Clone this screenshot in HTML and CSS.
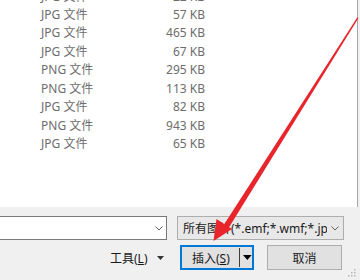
FILE: index.html
```html
<!DOCTYPE html>
<html>
<head>
<meta charset="utf-8">
<link rel="stylesheet" href="styles.css">
</head>
<body>
<div class="dialog">
  <div class="list">
    <div class="rows">
      <div class="row"><span class="type">JPG 文件</span><span class="size">22 KB</span></div>
      <div class="row"><span class="type">JPG 文件</span><span class="size">57 KB</span></div>
      <div class="row"><span class="type">JPG 文件</span><span class="size">465 KB</span></div>
      <div class="row"><span class="type">JPG 文件</span><span class="size">67 KB</span></div>
      <div class="row"><span class="type">PNG 文件</span><span class="size">295 KB</span></div>
      <div class="row"><span class="type">PNG 文件</span><span class="size">113 KB</span></div>
      <div class="row"><span class="type">JPG 文件</span><span class="size">82 KB</span></div>
      <div class="row"><span class="type">PNG 文件</span><span class="size">943 KB</span></div>
      <div class="row"><span class="type">JPG 文件</span><span class="size">65 KB</span></div>
    </div>
  </div>
  <div class="bottom">
    <div class="line1">
      <div class="name-box">
        <svg class="chev" width="8" height="5" viewBox="0 0 8 5"><path d="M0.5 0.5 L4 4 L7.5 0.5" fill="none" stroke="#606060" stroke-width="1"/></svg>
      </div>
      <div class="filter-box">
        <span class="filter-text">所有图片(*.emf;*.wmf;*.jpg;*.jpeg;*.png)</span>
        <svg class="chev" width="8" height="5" viewBox="0 0 8 5"><path d="M0.5 0.5 L4 4 L7.5 0.5" fill="none" stroke="#606060" stroke-width="1"/></svg>
      </div>
    </div>
    <div class="line2">
      <div class="tools">工具(<u>L</u>)</div>
      <svg class="tools-tri" width="7" height="4" viewBox="0 0 7 4"><path d="M0 0 H7 L3.5 4 Z" fill="#333"/></svg>
      <div class="btn insert">
        <span class="insert-label">插入(<u>S</u>)</span>
        <span class="sep"></span>
        <svg class="insert-tri" width="9" height="5" viewBox="0 0 9 5"><path d="M0 0 H9 L4.5 5 Z" fill="#000"/></svg>
      </div>
      <div class="btn cancel">取消</div>
    </div>
    <svg class="grip" width="8" height="8" viewBox="0 0 8 8">
      <rect x="6" y="0" width="1.5" height="1.5" fill="#b8b8b8"/>
      <rect x="3" y="3" width="1.5" height="1.5" fill="#b8b8b8"/>
      <rect x="6" y="3" width="1.5" height="1.5" fill="#b8b8b8"/>
      <rect x="0" y="6" width="1.5" height="1.5" fill="#b8b8b8"/>
      <rect x="3" y="6" width="1.5" height="1.5" fill="#b8b8b8"/>
      <rect x="6" y="6" width="1.5" height="1.5" fill="#b8b8b8"/>
    </svg>
  </div>
  <svg class="arrow" width="360" height="280" viewBox="0 0 360 280">
    <polygon points="358.5,18 357.2,17.5 220.5,230 225.5,233" fill="#e8252b"/>
    <polygon points="213.5,241 216.5,219 232,229" fill="#e8252b"/>
  </svg>
</div>
</body>
</html>
```

FILE: styles.css
```css
* { box-sizing: border-box; }
html, body { margin: 0; padding: 0; }
body {
  width: 360px;
  height: 280px;
  overflow: hidden;
  background: #f0f0f0;
  font-family: "Noto Sans", "Noto Sans CJK SC", sans-serif;
  font-size: 12px;
}
.dialog {
  position: relative;
  width: 360px;
  height: 280px;
}
.list {
  height: 207px;
  background: #fff;
  border-right: 1px solid #a8a8a8;
  width: 358px;
  overflow: hidden;
}
.rows {
  margin-top: -12.5px;
}
.row {
  display: grid;
  grid-template-columns: 110px 54px;
  padding-left: 41px;
  height: 18.45px;
  line-height: 18.45px;
  color: #6d6d6d;
}
.size { text-align: right; }
.bottom {
  position: relative;
  height: 73px;
  padding-top: 9px;
}
.line1 {
  display: flex;
  height: 24px;
}
.name-box {
  width: 168px;
  margin-left: -1px;
  height: 24px;
  background: #fff;
  border: 1px solid #7a7a7a;
  display: flex;
  align-items: center;
  justify-content: flex-end;
  padding-right: 3px;
}
.filter-box {
  margin-left: 10px;
  width: 167px;
  height: 24px;
  background: #e8e8e8;
  border: 1px solid #adadad;
  display: flex;
  align-items: center;
  padding-left: 5px;
  padding-right: 4px;
  gap: 4px;
  color: #1a1a1a;
}
.filter-text {
  flex: 1;
  overflow: hidden;
  white-space: nowrap;
}
.line2 {
  display: flex;
  align-items: center;
  height: 25px;
  margin-top: 5px;
}
.tools {
  margin-left: 110px;
  color: #1a1a1a;
  width: 47px;
}
.tools-tri { margin-left: 0; }
.btn {
  height: 25px;
  background: #e1e1e1;
  border: 1px solid #adadad;
  display: flex;
  align-items: center;
  justify-content: center;
  color: #1a1a1a;
}
.insert {
  margin-left: 16px;
  width: 74px;
  border: 2px solid #0078d7;
  justify-content: flex-start;
  padding-left: 10px;
}
.insert-label { width: 49px; }
.sep {
  width: 1px;
  height: 19px;
  background: #3c3c3c;
}
.insert-tri { margin-left: 3px; }
.cancel {
  margin-left: 13px;
  width: 75px;
}
.grip {
  position: absolute;
  right: 4px;
  bottom: 3px;
}
.arrow {
  position: absolute;
  left: 0;
  top: 0;
  pointer-events: none;
}
```
